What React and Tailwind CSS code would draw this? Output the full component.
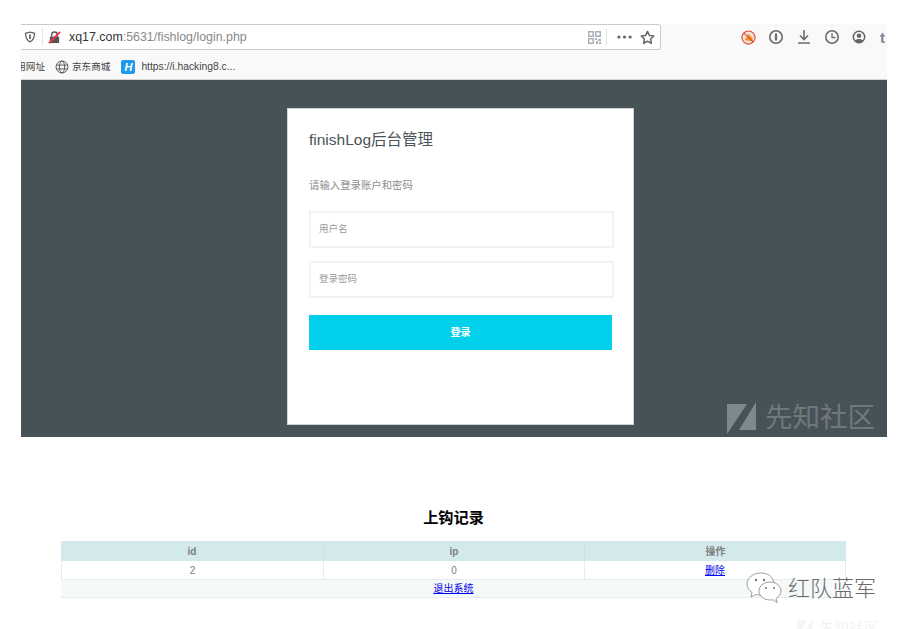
import React from 'react';

const fontStack = "font-['Liberation_Sans','Noto_Sans_CJK_SC',sans-serif]";

const ToolIcon = ({ children, className = '' }) => (
  <svg viewBox="0 0 16 16" className={`w-[16px] h-[16px] ${className}`} fill="none" stroke="#6b6b6b" strokeWidth="1.6">
    {children}
  </svg>
);

const BrowserBar = () => (
  <div className="bg-[#f9f9f9]">
    {/* Address bar row */}
    <div className="flex items-start h-[26px]">
      <div className="flex items-center w-[640px] h-[26px] bg-white border-y border-r border-[#cbcbcb] rounded-br-[3px] rounded-tr-[3px]">
        <svg viewBox="0 0 16 16" className="ml-[3px] w-[12px] h-[12px]" fill="none" stroke="#666" strokeWidth="1.8">
          <path d="M8 1.500 14 3c0 5-1 9-6 11.500C3 12 2 8 2 3z" />
          <path d="M8 4.500v6" strokeWidth="2.400" />
        </svg>
        <div className="ml-[6px] w-px h-[18px] bg-[#e6e6e6]" />
        <svg viewBox="0 0 14 14" className="ml-[5px] w-[13px] h-[13px]">
          <path d="M2 6h10v7H2z" fill="#555" />
          <path d="M4 6V4a3 3 0 0 1 6 0v2" fill="none" stroke="#555" strokeWidth="1.500" />
          <path d="M1 13 13 1" stroke="#f0304f" strokeWidth="2" />
        </svg>
        <span className="ml-[8px] text-[12.400px] text-[#333] leading-none">
          xq17.com<span className="text-[#8a8a8a]">:5631/fishlog/login.php</span>
        </span>
        <div className="ml-auto flex items-center">
          <svg viewBox="0 0 13 13" className="w-[13px] h-[13px]" fill="#aab1b8">
            <path d="M0 0h6v6H0zM7 0h6v6H7zM0 7h6v6H0z" />
            <path d="M1.500 1.500h3v3h-3zM8.500 1.500h3v3h-3zM1.500 8.500h3v3h-3z" fill="#fff" />
            <path d="M7 7h2v2H7zM10 8h3v2h-3zM8 10h2v3H8zM11 11h2v2h-2z" />
          </svg>
          <div className="ml-[5px] w-px h-[18px] bg-[#e6e6e6]" />
          <svg viewBox="0 0 16 4" className="ml-[10px] w-[15px] h-[4px]" fill="#666">
            <circle cx="2" cy="2" r="1.700" />
            <circle cx="8" cy="2" r="1.700" />
            <circle cx="14" cy="2" r="1.700" />
          </svg>
          <svg viewBox="0 0 16 16" className="ml-[8px] mr-[5px] w-[15px] h-[15px]" fill="none" stroke="#666" strokeWidth="1.600" strokeLinejoin="round">
            <path d="m8 1.500 2 4.300 4.700.6-3.400 3.200.9 4.700L8 12l-4.200 2.300.9-4.700L1.300 6.400 6 5.800z" />
          </svg>
        </div>
      </div>
      {/* Toolbar icons */}
      <div className="flex items-center h-[26px] ml-[80px] gap-[12px]">
        <svg viewBox="0 0 16 16" className="w-[15px] h-[15px]">
          <circle cx="8" cy="8" r="7" fill="#f3e3d8" stroke="#e4463c" strokeWidth="1.200" />
          <path d="M4 11 8 4l4 4 1 4z" fill="#e9951f" />
          <path d="M3 3l10 10" stroke="#e4463c" strokeWidth="1.200" />
        </svg>
        <ToolIcon>
          <circle cx="8" cy="8" r="6.200" />
          <path d="M8 4.500v7" strokeWidth="2.200" />
        </ToolIcon>
        <ToolIcon>
          <path d="M8 1v9M4 6.500 8 10.500l4-4M2 14h12" />
        </ToolIcon>
        <ToolIcon>
          <circle cx="8" cy="8" r="6.200" />
          <path d="M8 4v4.500h3.500" strokeWidth="1.300" />
        </ToolIcon>
        <svg viewBox="0 0 16 16" className="w-[14px] h-[14px]">
          <circle cx="8" cy="8" r="6.500" fill="none" stroke="#666" strokeWidth="1.800" />
          <circle cx="8" cy="6.500" r="2.600" fill="#666" />
          <path d="M3.500 12.500c1-3 8-3 9 0L8 15z" fill="#666" />
        </svg>
        <span className="ml-[2px] w-[6px] overflow-hidden text-[15px] font-bold text-[#7b8794] leading-none">t</span>
      </div>
    </div>

    {/* Bookmarks row */}
    <div className="flex items-center h-[30px] pt-[5px] border-b border-[#d4d4d4] text-[9.600px] text-[#444] overflow-hidden whitespace-nowrap">
      <span className="w-[24px] overflow-hidden flex justify-end">
        <span>用网址</span>
      </span>
      <svg viewBox="0 0 16 16" className="ml-[10px] w-[14px] h-[14px]" fill="none" stroke="#555" strokeWidth="1.100">
        <circle cx="8" cy="8" r="6.800" />
        <ellipse cx="8" cy="8" rx="3" ry="6.800" />
        <path d="M1.500 5.800h13M1.500 10.200h13" />
      </svg>
      <span className="ml-[3px]">京东商城</span>
      <span className="ml-[11px] flex items-center justify-center w-[14px] h-[14px] bg-[#1d9be9] rounded-[2px] text-white text-[11px] font-bold italic leading-none">H</span>
      <span className="ml-[6px] text-[10.300px] text-[#444]">https://i.hacking8.c...</span>
    </div>
  </div>
);

const LoginCard = () => (
  <div className="w-[347px] h-[317px] bg-white border border-[#cfd3d4] px-[21px]">
    <h1 className="mt-[21px] text-[15.500px] leading-[20px] text-[#4a5357]">finishLog后台管理</h1>
    <p className="mt-[30px] text-[10.400px] leading-[12px] text-[#8f8f8f]">请输入登录账户和密码</p>
    <div className="mt-[19px] h-[37px] w-[305px] border-2 border-[#f2f2f2] flex items-center pl-[8px] text-[9.500px] text-[#9a9a9a]">用户名</div>
    <div className="mt-[13px] h-[37px] w-[305px] border-2 border-[#f2f2f2] flex items-center pl-[8px] text-[9.500px] text-[#9a9a9a]">登录密码</div>
    <div className="mt-[17px] h-[35px] w-[303px] bg-[#00d0ea] flex items-center justify-center text-[10px] font-bold text-white">登录</div>
  </div>
);

const RecordsTable = () => (
  <div className="ml-[61px] w-[785px] text-[10px] text-[#7d7d7d] border-b border-[#e6edf0]">
    <div className="grid grid-cols-[263px_261px_1fr] h-[20px] bg-[#d3e9ec] font-bold items-center text-center">
      <div className="h-full flex items-center justify-center border-r border-[#cbe3e7]">id</div>
      <div className="h-full flex items-center justify-center border-r border-[#cbe3e7]">ip</div>
      <div>操作</div>
    </div>
    <div className="grid grid-cols-[262px_261px_1fr] h-[18px] bg-white items-center text-center border-x border-[#e6edf0]">
      <div className="h-full flex items-center justify-center border-r border-[#e6edf0]">2</div>
      <div className="h-full flex items-center justify-center border-r border-[#e6edf0]">0</div>
      <a href="#" className="text-[#0000ee] underline">删除</a>
    </div>
    <div className="h-[18px] bg-[#f5f9fa] border-t border-[#e6edf0] flex items-center justify-center">
      <a href="#" className="text-[#0000ee] underline">退出系统</a>
    </div>
  </div>
);

const App = () => (
  <div className={`relative w-[905px] h-[629px] overflow-hidden bg-white ${fontStack}`}>
    <div className="pt-[24px] ml-[21px] w-[866px]">
      <BrowserBar />
      <div className="h-[357px] bg-[#475257] flex justify-center pt-[28px] pl-[13px]">
        <LoginCard />
      </div>
    </div>

    <h2 className="mt-[71px] pl-[2px] text-center text-[15.200px] leading-[20px] font-bold text-black">上钩记录</h2>
    <div className="mt-[13px]">
      <RecordsTable />
    </div>

    {/* Watermarks over the picture */}
    <div className="absolute left-[727px] top-[402px] flex items-center">
      <svg viewBox="0 0 30 32" className="w-[30px] h-[32px]">
        <path d="M0 2h20L0 32z" fill="#7f898c" />
        <path d="M29 0v28H12z" fill="#7f898c" />
      </svg>
      <span className="ml-[8px] text-[27.500px] leading-none text-[#6f797d]">先知社区</span>
    </div>
    <div className="absolute left-[797px] top-[619px] flex items-center">
      <svg viewBox="0 0 30 32" className="w-[16px] h-[17px]">
        <path d="M0 2h20L0 32z" fill="#f4f5f5" />
        <path d="M29 0v28H12z" fill="#f4f5f5" />
      </svg>
      <span className="ml-[6px] text-[15px] leading-none whitespace-nowrap text-[#f2f3f3]">先知社区</span>
    </div>

    <div className="absolute left-[745px] top-[572px] flex items-center">
      <svg viewBox="0 0 38 34" className="w-[38px] h-[34px]" fill="#fff" stroke="#777" strokeWidth="0.700">
        <path d="M16 1C8 1 2 6 2 12c0 3.500 2 6.500 5 8.500L6 25l5-2.500c1.500.4 3 .6 5 .6 8 0 13-5 13-11S24 1 16 1z" />
        <path d="M25 10c-6 0-11 4-11 9s5 9 11 9c1 0 2 0 3-.3l4 2.800-1-4c3-1.700 5-4.300 5-7.500 0-5-5-9-11-9z" />
        <circle cx="11" cy="8" r="1.200" fill="#777" stroke="none" />
        <circle cx="19" cy="8" r="1.200" fill="#777" stroke="none" />
        <circle cx="21" cy="16" r="1.100" fill="#777" stroke="none" />
        <circle cx="29" cy="16" r="1.100" fill="#777" stroke="none" />
      </svg>
      <span className="ml-[5px] text-[22px] leading-none text-[#6a6a6a] font-light">红队蓝军</span>
    </div>
  </div>
);

export default App;
